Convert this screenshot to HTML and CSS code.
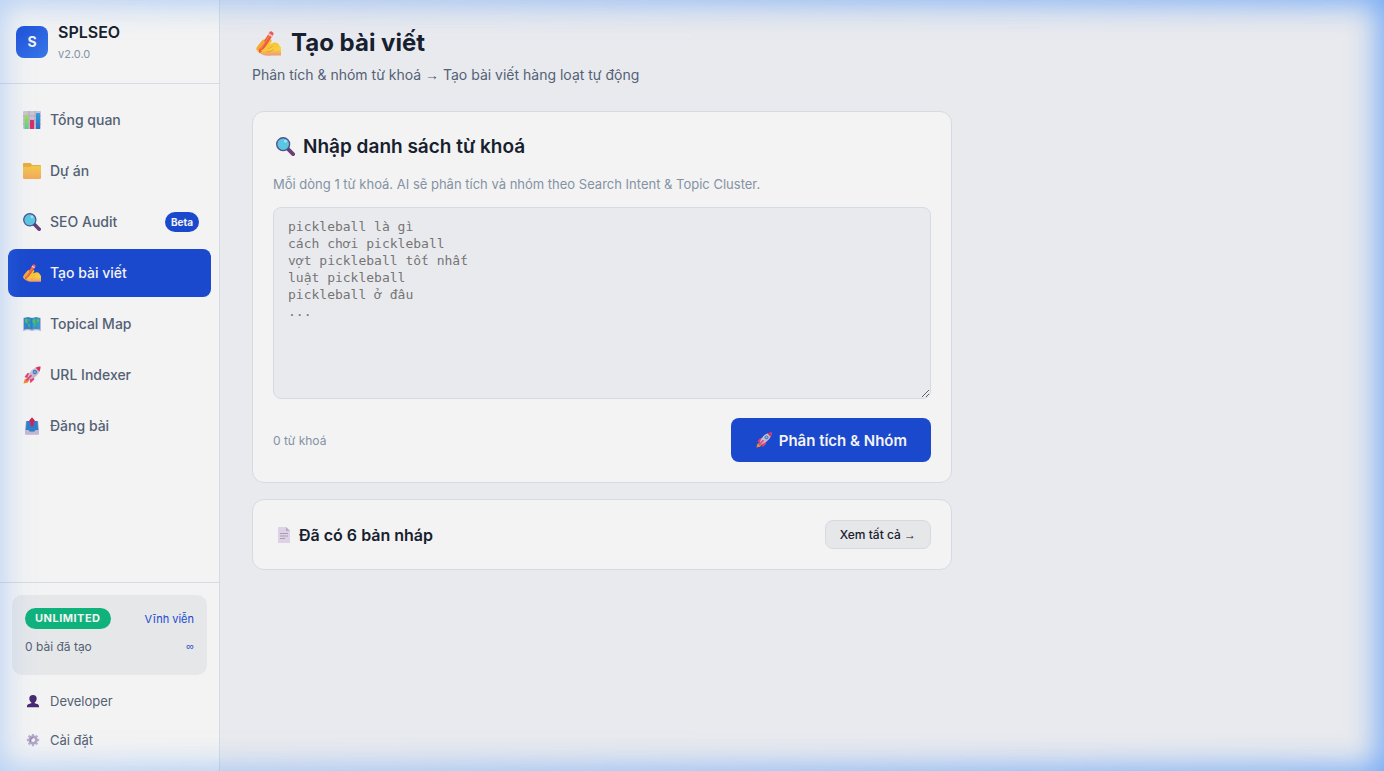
FILE: index.html
```html
<!DOCTYPE html>
<html lang="vi">
  <head>
    <meta charset="UTF-8" />
    <meta name="viewport" content="width=device-width, initial-scale=1.0" />
    <title>SPLSEO</title>
    <link rel="stylesheet" href="styles.css">
  </head>
  <body>
    <!-- Shared icons -->
    <svg class="sprite" aria-hidden="true">
      <defs>
        <linearGradient id="gold" x1="0" y1="0" x2="0" y2="1">
          <stop offset="0" stop-color="#f2c94b" />
          <stop offset="1" stop-color="#f3a95c" />
        </linearGradient>
        <linearGradient id="skin" x1="0" y1="0" x2="0" y2="1">
          <stop offset="0" stop-color="#f9b932" />
          <stop offset="0.6" stop-color="#f7d23c" />
          <stop offset="1" stop-color="#f0967a" />
        </linearGradient>
        <linearGradient id="body" x1="0" y1="0" x2="1" y2="1">
          <stop offset="0" stop-color="#ded5e6" />
          <stop offset="1" stop-color="#aea0bf" />
        </linearGradient>
        <linearGradient id="green" x1="0" y1="0" x2="0" y2="1">
          <stop offset="0" stop-color="#a5dc53" />
          <stop offset="1" stop-color="#5fcf8e" />
        </linearGradient>
        <linearGradient id="blue" x1="0" y1="0" x2="0" y2="1">
          <stop offset="0" stop-color="#2f9fe0" />
          <stop offset="1" stop-color="#3071c0" />
        </linearGradient>
      </defs>
      <symbol id="i-chart" viewBox="0 0 18 18">
        <rect width="18" height="18" rx="1" fill="#cbc3d3" />
        <path d="M0 5h18M0 9h18M0 13h18M6 0v18M12 0v18" stroke="#aba1b8" stroke-width=".7" />
        <rect x="1.500" y="4" width="4" height="14" rx=".6" fill="url(#green)" />
        <rect x="7" y="9" width="4" height="9" rx=".6" fill="#d62e6a" />
        <rect x="13" y="2" width="4" height="16" rx=".6" fill="url(#blue)" />
      </symbol>
      <symbol id="i-folder" viewBox="0 0 18 18">
        <path d="M0 2q0-1 1-1h6q1 0 1.500 1l.5 1h8q1 0 1 1v12H0z" fill="#e9ad3c" />
        <path d="M0 6q0-1 1-1h6l1.500-1H17q1 0 1 1v11q0 1-1 1H1q-1 0-1-1z" fill="url(#gold)" />
      </symbol>
      <symbol id="i-search" viewBox="0 0 18 18">
        <path d="M11.500 11.500l4.700 4.700" stroke="#6c3f78" stroke-width="3.600" stroke-linecap="round" />
        <path d="M10.500 10.500l2 2" stroke="#52436b" stroke-width="2" />
        <circle cx="6.800" cy="6.800" r="6.100" fill="#5cc6e0" stroke="#4d5190" stroke-width="1.300" />
        <circle cx="9" cy="4" r="1.400" fill="#9de4ee" />
      </symbol>
      <symbol id="i-write" viewBox="0 0 24 24">
        <path d="M.5 18.500Q0 16.500 2 14l4-5q1.500-1.500 3-.8l5-.2q2 .8.700 2.600l-1.700 2 4.500-1.500q3-.4 4.300 1.700L24 16v7.500h-9q-5 .5-8-.5-4-1-6.500-4.500z" fill="url(#skin)" />
        <path d="M9 17q4 .6 7-2.500M10 20q4 .3 7-2.500" fill="none" stroke="#ea9a2c" stroke-width=".8" />
        <path d="M2.500 17.500L12 2.800l3.600 2.200L6.500 19.500 3 21z" fill="#ee5b40" />
        <path d="M4.500 17.500L13.500 3.700" stroke="#f58a4c" stroke-width=".9" />
        <path d="M12.800 1.500q.8-1.700 2.300-1l1 .6q1.300 1 .5 2.400L15.600 5 12 2.800z" fill="#ec5a60" />
        <path d="M11.500 3.600l3.600 2.200.9-1.500-3.600-2.200z" fill="#f5c9c6" />
        <path d="M.5 18q-.4-1.800 1.500-4l3.500-4.300q1.500-1.500 2.600-.3.900 1-.4 2.600L4.500 16q-1.500 2.300-4 2z" fill="#f6a83a" />
        <path d="M4.500 18.500q2-.3 3.600-2.300l2.400-2.600q1.500-.8 2.200.4.500 1-.7 2.300L8 20.500q-2.500-.2-3.500-2z" fill="#f9c638" />
      </symbol>
      <symbol id="i-map" viewBox="0 0 18 18">
        <path d="M0 3l4.500-1L9 3l4.500-1L18 3v13l-4.500-1L9 16l-4.500-1L0 16z" fill="#c2b6d5" />
        <path d="M1 3l4-.8v11.600L1 14.600zM5 2.200L9 3v11.600l-4-.8z" fill="#2f87ca" />
        <path d="M9 3l4-.8v11.600l-4 .8zM13 2.200l4 .8v11.600l-4-.8z" fill="#3498d5" />
        <path d="M2 4l3-.6 2 1.600-2 2 1 2 1 1-1 3-1-1.600-.6-2.400L2 7zM9 5l4-1.500L16.500 5l-1.300 2-1.500.7.300 2-1 3-1.400-1.400-.6-3.300L9 7.500z" fill="#4fbc79" />
        <path d="M5 2.200v11.600M9 3v11.600M13 2.200v11.600" stroke="#27659f" stroke-width=".5" />
      </symbol>
      <symbol id="i-rocket" viewBox="0 0 18 18">
        <path d="M.5 17.500l1-4 3.500-2 2 2-2.500 3.200z" fill="#f28b2f" />
        <path d="M1.500 11l3-4 4.500.5-3.500 5zM6.800 13l4-3.500.5 4-4 3.700z" fill="#e53f75" />
        <path d="M4.300 12Q5.500 6.500 10 3q3-2.200 7.500-2.500.2 4.500-2.500 7.500-3.500 4.500-9 5.700z" fill="url(#body)" />
        <path d="M12.600 1.700Q15 .6 17.500.5q0 2.500-1 4.900z" fill="#e12c55" />
        <circle cx="11.800" cy="6" r="2.200" fill="#487bb8" />
        <circle cx="11.800" cy="6" r="1.100" fill="#79b8e3" />
        <path d="M4 14L8 9.600" stroke="#e53f75" stroke-width="1.700" stroke-linecap="round" />
      </symbol>
      <symbol id="i-outbox" viewBox="0 0 18 18">
        <path d="M3 4h12l1 9v3.500q0 1-1 1H3q-1 0-1-1V13z" fill="#b9aaca" />
        <path d="M3.500 4h11l.8 10.500H2.700z" fill="#2d80cb" />
        <path d="M2 13h3.500l1.300 2h4.400l1.300-2H16v3.500q0 1-1 1H3q-1 0-1-1z" fill="#c5b7d2" />
        <path d="M9 .2L12.500 4.500H10.500v4.700h-3V4.500h-2z" fill="#d91d51" />
      </symbol>
      <symbol id="i-user" viewBox="0 0 16 16">
        <path d="M8 1c2.900 0 4.200 1.500 4.200 4.200 0 2-.9 3.500-2.200 4.300v1l3.600 1.200q1.400.6 1.400 3.300H1q0-2.700 1.400-3.300L6 10.500v-1c-1.300-.8-2.200-2.300-2.200-4.300C3.800 2.500 5.100 1 8 1z" fill="#482a70" />
      </symbol>
      <symbol id="i-gear" viewBox="0 0 16 16">
        <path d="M8 1v14M1 8h14M3 3l10 10M13 3L3 13" stroke="#bcaed0" stroke-width="2.600" />
        <circle cx="8" cy="8" r="3.800" fill="#f3f3f3" stroke="#b3a4c6" stroke-width="2.800" />
        <path d="M5.500 10Q4.500 6.500 8 5.400" fill="none" stroke="#8c7ca0" stroke-width="1.200" />
      </symbol>
      <symbol id="i-page" viewBox="0 0 16 16">
        <path d="M2 0h8l4 4v12H2z" fill="#ddd2e5" />
        <path d="M10 0l4 4h-4z" fill="#b7abc2" />
        <path d="M4 6.500h8M4 9h8M4 11.500h5" stroke="#a99db2" />
      </symbol>
    </svg>

    <div class="layout">
      <aside class="sidebar">
        <div class="brand">
          <div class="brand-logo">S</div>
          <div>
            <div class="brand-name">SPLSEO</div>
            <div class="brand-version">v2.0.0</div>
          </div>
        </div>

        <nav class="menu">
          <a href="#" class="menu-item"><svg class="icon"><use href="#i-chart" /></svg>Tổng quan</a>
          <a href="#" class="menu-item"><svg class="icon"><use href="#i-folder" /></svg>Dự án</a>
          <a href="#" class="menu-item"><svg class="icon"><use href="#i-search" /></svg>SEO Audit<span class="beta">Beta</span></a>
          <a href="#" class="menu-item active"><svg class="icon"><use href="#i-write" /></svg>Tạo bài viết</a>
          <a href="#" class="menu-item"><svg class="icon"><use href="#i-map" /></svg>Topical Map</a>
          <a href="#" class="menu-item"><svg class="icon"><use href="#i-rocket" /></svg>URL Indexer</a>
          <a href="#" class="menu-item"><svg class="icon"><use href="#i-outbox" /></svg>Đăng bài</a>
        </nav>

        <div class="sidebar-footer">
          <div class="plan">
            <div class="plan-row">
              <span class="plan-badge">UNLIMITED</span>
              <a href="#" class="plan-term">Vĩnh viễn</a>
            </div>
            <div class="plan-row">
              <span class="plan-count">0 bài đã tạo</span>
              <span class="plan-term symbol">∞</span>
            </div>
          </div>
          <a href="#" class="footer-item"><svg class="icon-small"><use href="#i-user" /></svg>Developer</a>
          <a href="#" class="footer-item"><svg class="icon-small"><use href="#i-gear" /></svg>Cài đặt</a>
        </div>
      </aside>

      <main class="content">
        <header class="page-header">
          <h1><svg class="icon-title"><use href="#i-write" /></svg>Tạo bài viết</h1>
          <p>Phân tích &amp; nhóm từ khoá <span class="symbol">→</span> Tạo bài viết hàng loạt tự động</p>
        </header>

        <form class="card">
          <h2><svg class="icon-heading"><use href="#i-search" /></svg>Nhập danh sách từ khoá</h2>
          <label class="hint" for="keywords">Mỗi dòng 1 từ khoá. AI sẽ phân tích và nhóm theo Search Intent &amp; Topic Cluster.</label>
          <textarea id="keywords" class="keywords" placeholder="pickleball là gì
cách chơi pickleball
vợt pickleball tốt nhất
luật pickleball
pickleball ở đâu
..."></textarea>
          <div class="card-actions">
            <span class="count">0 từ khoá</span>
            <button type="button" class="btn-primary"><svg class="icon-medium"><use href="#i-rocket" /></svg>Phân tích &amp; Nhóm</button>
          </div>
        </form>

        <section class="card drafts">
          <h3><svg class="icon-medium"><use href="#i-page" /></svg>Đã có 6 bản nháp</h3>
          <button type="button" class="btn-secondary">Xem tất cả <span class="symbol">→</span></button>
        </section>
      </main>
    </div>
    <div class="glow"></div>
  </body>
</html>
```
FILE: styles.css
```css
* {
  box-sizing: border-box;
}

body {
  margin: 0;
  font-family: Inter, "Noto Sans", sans-serif;
  font-size: 14px;
  color: #17202e;
  background-color: #e9eaee;
}

h1,
h2,
h3,
p {
  margin: 0;
}

a {
  text-decoration: none;
}

button {
  font-family: inherit;
  cursor: pointer;
}

.sprite {
  display: block;
  width: 0;
  height: 0;
}

.symbol {
  font-family: "Liberation Sans", sans-serif;
  line-height: 1;
}

.layout {
  display: flex;
  min-height: 100vh;
}

/* Sidebar */
.sidebar {
  display: flex;
  flex-direction: column;
  flex-shrink: 0;
  width: 220px;
  background-color: #f3f3f3;
  border-right: 1px solid #d5dbe3;
}

.brand {
  display: flex;
  align-items: center;
  gap: 10px;
  padding: 20px 16px;
  border-bottom: 1px solid #d5dbe3;
}

.brand-logo {
  display: flex;
  align-items: center;
  justify-content: center;
  width: 32px;
  height: 32px;
  border-radius: 8px;
  background: linear-gradient(135deg, #1d4ed8, #3878e8);
  color: #f3f3f3;
  font-weight: 700;
}

.brand-name {
  font-size: 16px;
  font-weight: 600;
  line-height: 25px;
}

.brand-version {
  font-size: 11px;
  line-height: 18px;
  color: #8492a4;
}

.menu {
  display: flex;
  flex-direction: column;
  flex: 1;
  gap: 3px;
  padding: 12px 8px;
}

.menu-item {
  display: flex;
  align-items: center;
  gap: 9px;
  height: 48px;
  padding: 0 12px 1px 15px;
  border-radius: 8px;
  color: #536175;
  font-weight: 500;
}

.menu-item.active {
  background-color: #1b49ce;
  color: #f3f3f3;
}

.icon {
  width: 18px;
  height: 18px;
}

.beta {
  margin-left: auto;
  padding: 0 6px;
  border-radius: 10px;
  background-color: #1b49ce;
  color: #f3f3f3;
  font-size: 10px;
  font-weight: 700;
  line-height: 20px;
}

.sidebar-footer {
  padding: 12px;
  border-top: 1px solid #d5dbe3;
}

.plan {
  height: 80px;
  margin-bottom: 6px;
  padding: 13px;
  border-radius: 10px;
  background-color: #e5e7e9;
}

.plan-row {
  display: flex;
  align-items: center;
  justify-content: space-between;
  margin-bottom: 8px;
}

.plan-badge {
  padding: 0 10px;
  border-radius: 11px;
  background-color: #10b27c;
  color: #f3f3f3;
  font-size: 11px;
  font-weight: 700;
  letter-spacing: 0.5px;
  line-height: 21px;
}

.plan-term {
  color: #1b49ce;
  font-size: 11px;
}

.plan-count {
  color: #536175;
  font-size: 12px;
  line-height: 19px;
}

.footer-item {
  display: flex;
  align-items: center;
  gap: 10px;
  height: 39px;
  padding: 0 14px;
  color: #536175;
  font-size: 13px;
}

.icon-small {
  width: 14px;
  height: 14px;
}

.icon-medium {
  width: 16px;
  height: 16px;
}

/* Main content */
.content {
  flex: 1;
  padding: 24px 32px;
}

.page-header {
  margin-bottom: 25px;
}

.page-header h1 {
  display: flex;
  align-items: center;
  gap: 10px;
  padding-left: 4px;
  font-size: 24px;
  font-weight: 700;
  line-height: 38px;
}

.icon-title {
  width: 25px;
  height: 25px;
}

.page-header p {
  margin-top: 2px;
  color: #536175;
  line-height: 22px;
}

.card {
  max-width: 700px;
  margin-bottom: 16px;
  padding: 20px;
  border: 1px solid #d5dbe3;
  border-radius: 12px;
  background-color: #f3f3f3;
}

.card h2 {
  display: flex;
  align-items: center;
  gap: 8px;
  padding-left: 3px;
  font-size: 19px;
  font-weight: 600;
  line-height: 29px;
}

.icon-heading {
  width: 19px;
  height: 19px;
}

.hint {
  display: block;
  margin: 12px 0;
  color: #8492a4;
  font-size: 13px;
  line-height: 22px;
}

.keywords {
  display: block;
  width: 100%;
  height: 192px;
  padding: 10px 14px;
  border: 1px solid #d5dbe3;
  border-radius: 8px;
  background-color: #e9eaee;
  color: #17202e;
  font-family: Consolas, "DejaVu Sans Mono", monospace;
  font-size: 13px;
  line-height: 17px;
  resize: vertical;
}

.keywords::placeholder {
  color: #757575;
}

.card-actions {
  display: flex;
  align-items: center;
  justify-content: space-between;
  margin-top: 19px;
}

.count {
  color: #8492a4;
  font-size: 12px;
}

.btn-primary {
  display: flex;
  align-items: center;
  gap: 7px;
  height: 44px;
  padding: 0 24px 0 25px;
  border: none;
  border-radius: 8px;
  background-color: #1b49ce;
  color: #f3f3f3;
  font-size: 15px;
  font-weight: 600;
}

.drafts {
  display: flex;
  align-items: center;
  justify-content: space-between;
}

.drafts h3 {
  display: flex;
  align-items: center;
  gap: 7px;
  padding-left: 3px;
  font-size: 16px;
  font-weight: 600;
}

.btn-secondary {
  height: 29px;
  padding: 0 14px;
  border: 1px solid #d5dbe3;
  border-radius: 8px;
  background-color: #e5e7e9;
  color: #17202e;
  font-size: 12px;
  font-weight: 500;
}

/* Blue glow around the window, stronger on the right */
.glow {
  position: fixed;
  inset: 0;
  pointer-events: none;
  box-shadow: inset -2px 0 30px 4px rgba(70, 145, 250, 0.72);
  mask-image: linear-gradient(to right, rgba(0, 0, 0, 0.5), #000);
}
```
